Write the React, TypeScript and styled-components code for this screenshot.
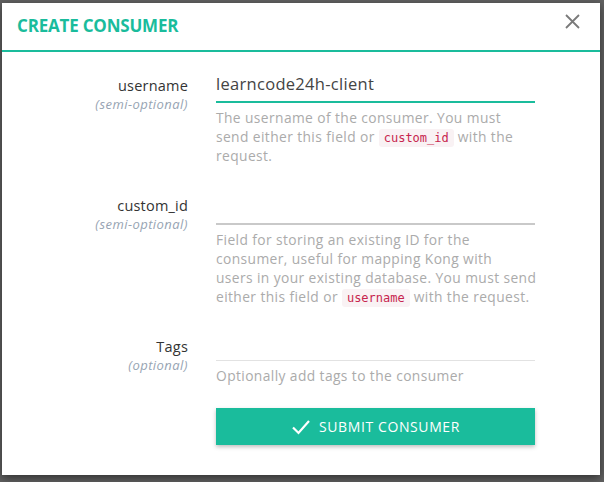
import React from "react";
import styled, { createGlobalStyle } from "styled-components";

const Global = createGlobalStyle`
  html, body { margin: 0; padding: 0; }
  body {
    background: #616161;
    font-family: "Open Sans", "Noto Sans", sans-serif;
    width: 604px;
    height: 482px;
    overflow: hidden;
  }
`;

const Backdrop = styled.div`
  width: 604px;
  height: 482px;
  box-sizing: border-box;
  padding: 3px 4px 7px 2px;
  background: #616161;
`;

const Modal = styled.div`
  background: #fff;
  height: 100%;
  display: flex;
  flex-direction: column;
  box-shadow: 0 3px 9px rgba(0, 0, 0, 0.5);
`;

const Header = styled.div`
  flex: none;
  box-sizing: border-box;
  display: flex;
  align-items: center;
  justify-content: space-between;
  padding: 0 20px 2px 15px;
  border-bottom: 2px solid #1abc9c;
  height: 49px;
`;

const Title = styled.h4`
  margin: 0;
  font-size: 17px;
  font-weight: 700;
  color: #1abc9c;
  letter-spacing: -0.2px;
`;

const Close = styled.button`
  border: 0;
  background: none;
  padding: 0;
  width: 16px;
  height: 16px;
  margin-top: -8px;
  color: #7a7a7a;
  display: flex;
  align-items: center;
  justify-content: center;
`;

const Body = styled.div`
  display: grid;
  grid-template-columns: 170px 319px;
  column-gap: 28px;
  padding: 16px 0 0 16px;
  align-items: start;
`;

const LabelCell = styled.div<{ $mt: number }>`
  text-align: right;
  margin-top: ${(p) => p.$mt}px;
`;

const LabelName = styled.div`
  font-size: 14.5px;
  color: #333;
  line-height: 19px;
  letter-spacing: 0.2px;
`;

const LabelHint = styled.div`
  font-size: 13px;
  font-style: italic;
  color: #97a4b3;
  line-height: 19px;
  letter-spacing: 0.45px;
`;

const FieldCell = styled.div<{ $mb: number }>`
  margin-bottom: ${(p) => p.$mb}px;
`;

const Input = styled.div<{ $state: "active" | "normal" | "light" }>`
  height: 35px;
  box-sizing: border-box;
  display: flex;
  align-items: center;
  padding-bottom: 2px;
  font-size: 16.5px;
  letter-spacing: 0.3px;
  color: #444;
  border-bottom: ${(p) =>
    p.$state === "active"
      ? "2px solid #1abc9c"
      : p.$state === "normal"
      ? "2px solid #c9c9c9"
      : "1px solid #e2e2e2"};
`;

const Help = styled.p`
  margin: 6px 0 0;
  font-size: 13.8px;
  line-height: 18.7px;
  letter-spacing: 0.4px;
  color: #ababab;
  white-space: nowrap;
`;

const Code = styled.code`
  display: inline-block;
  font-family: "DejaVu Sans Mono", "Liberation Mono", monospace;
  font-size: 12px;
  line-height: 14px;
  letter-spacing: 0;
  color: #c7254e;
  background: #f9f2f4;
  padding: 2px 5px;
  border-radius: 3px;
`;

const Submit = styled.button`
  grid-column: 2;
  height: 37px;
  border: 0;
  background: #1abc9c;
  color: #fff;
  font-family: inherit;
  font-size: 14px;
  letter-spacing: 0.6px;
  display: flex;
  align-items: center;
  justify-content: center;
  gap: 8px;
  box-shadow: 0 2px 4px rgba(0, 0, 0, 0.25);
  padding: 0;
`;

export default function App() {
  return (
    <>
      <Global />
      <Backdrop>
        <Modal>
          <Header>
            <Title>CREATE CONSUMER</Title>
            <Close aria-label="Close">
              <svg width="15" height="15" viewBox="0 0 15 15">
                <path d="M1 1 L14 14 M14 1 L1 14" stroke="currentColor" strokeWidth="1.8" />
              </svg>
            </Close>
          </Header>
          <Body>
            <LabelCell $mt={8}>
              <LabelName>username</LabelName>
              <LabelHint>(semi-optional)</LabelHint>
            </LabelCell>
            <FieldCell $mb={25}>
              <Input $state="active">learncode24h-client</Input>
              <Help>
                The username of the consumer. You must
                <br />
                send either this field or <Code>custom_id</Code> with the
                <br />
                request.
              </Help>
            </FieldCell>

            <LabelCell $mt={6}>
              <LabelName>custom_id</LabelName>
              <LabelHint>(semi-optional)</LabelHint>
            </LabelCell>
            <FieldCell $mb={19}>
              <Input $state="normal" />
              <Help>
                Field for storing an existing ID for the
                <br />
                consumer, useful for mapping Kong with
                <br />
                users in your existing database. You must send
                <br />
                either this field or <Code>username</Code> with the request.
              </Help>
            </FieldCell>

            <LabelCell $mt={11}>
              <LabelName>Tags</LabelName>
              <LabelHint>(optional)</LabelHint>
            </LabelCell>
            <FieldCell $mb={23}>
              <Input $state="light" />
              <Help>Optionally add tags to the consumer</Help>
            </FieldCell>

            <Submit>
              <svg width="20" height="16" viewBox="0 0 20 16">
                <path d="M2 8.5 L7.5 14 L18 2" fill="none" stroke="#fff" strokeWidth="2.2" />
              </svg>
              SUBMIT CONSUMER
            </Submit>
          </Body>
        </Modal>
      </Backdrop>
    </>
  );
}
